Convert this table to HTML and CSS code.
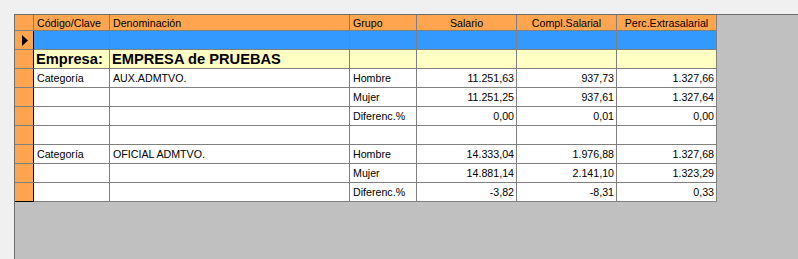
FILE: index.html
```html
<!DOCTYPE html>
<html lang="es">
<head>
<meta charset="utf-8">
<title>Grid</title>
<link rel="stylesheet" href="styles.css">
</head>
<body>
<div class="panel">
  <div class="grid">
    <div class="ind hdr"></div>
    <div class="c hdr">Código/Clave</div>
    <div class="c hdr">Denominación</div>
    <div class="c hdr">Grupo</div>
    <div class="c hdr ctr">Salario</div>
    <div class="c hdr ctr">Compl.Salarial</div>
    <div class="c hdr ctr">Perc.Extrasalarial</div>

    <div class="ind"><svg class="arrow" width="7" height="11" viewBox="0 0 7 11"><polygon points="0,0 6,5.5 0,11" fill="#000"/></svg></div>
    <div class="c sel"></div><div class="c sel"></div><div class="c sel"></div><div class="c sel"></div><div class="c sel"></div><div class="c sel"></div>

    <div class="ind"></div>
    <div class="c emp">Empresa:</div>
    <div class="c emp">EMPRESA de PRUEBAS</div>
    <div class="c emp"></div><div class="c emp"></div><div class="c emp"></div><div class="c emp"></div>

    <div class="ind"></div>
    <div class="c">Categoría</div><div class="c">AUX.ADMTVO.</div><div class="c">Hombre</div>
    <div class="c num">11.251,63</div><div class="c num">937,73</div><div class="c num">1.327,66</div>

    <div class="ind"></div>
    <div class="c"></div><div class="c"></div><div class="c">Mujer</div>
    <div class="c num">11.251,25</div><div class="c num">937,61</div><div class="c num">1.327,64</div>

    <div class="ind"></div>
    <div class="c"></div><div class="c"></div><div class="c">Diferenc.%</div>
    <div class="c num">0,00</div><div class="c num">0,01</div><div class="c num">0,00</div>

    <div class="ind"></div>
    <div class="c"></div><div class="c"></div><div class="c"></div>
    <div class="c"></div><div class="c"></div><div class="c"></div>

    <div class="ind"></div>
    <div class="c">Categoría</div><div class="c">OFICIAL ADMTVO.</div><div class="c">Hombre</div>
    <div class="c num">14.333,04</div><div class="c num">1.976,88</div><div class="c num">1.327,68</div>

    <div class="ind"></div>
    <div class="c"></div><div class="c"></div><div class="c">Mujer</div>
    <div class="c num">14.881,14</div><div class="c num">2.141,10</div><div class="c num">1.323,29</div>

    <div class="ind last"></div>
    <div class="c"></div><div class="c"></div><div class="c">Diferenc.%</div>
    <div class="c num">-3,82</div><div class="c num">-8,31</div><div class="c num">0,33</div>
  </div>
</div>
</body>
</html>
```

FILE: styles.css
```css
html, body {
  margin: 0;
  padding: 0;
  background: #f0f0f0;
  height: 100%;
  overflow: hidden;
}
.panel {
  margin: 14px 0 0 14px;
  height: 245px;
  box-sizing: border-box;
  background: #c0c0c0;
  border-top: 1px solid #6e6e6e;
  border-left: 1px solid #6e6e6e;
}
.grid {
  display: grid;
  grid-template-columns: 19px 76px 240px 67px 100px 100px 100px;
  grid-template-rows: 16px repeat(9, 19px);
  width: 702px;
  font-family: "Liberation Sans", Arial, sans-serif;
  font-size: 10.67px;
  color: #000;
}
.grid > div {
  box-sizing: border-box;
  border-right: 1px solid #808080;
  border-bottom: 1px solid #808080;
  white-space: nowrap;
  overflow: hidden;
  display: flex;
  align-items: center;
}
.c {
  background: #fff;
  padding: 0 3px;
}
.ind {
  background: #ffa54f;
  border-right-color: #000 !important;
  justify-content: flex-start;
  padding-left: 7px;
}
.ind.last {
  border-bottom-color: #000 !important;
}
.hdr {
  background: #ffa54f;
}
.hdr.ind {
  border-right-color: #808080 !important;
}
.ctr {
  justify-content: center;
}
.sel {
  background: #3399ff;
}
.emp {
  background: #ffffc4;
  font-weight: bold;
  font-size: 14.67px;
  padding-left: 2px;
}
.num {
  justify-content: flex-end;
  padding-right: 2px;
}
.arrow {
  display: block;
}
```
